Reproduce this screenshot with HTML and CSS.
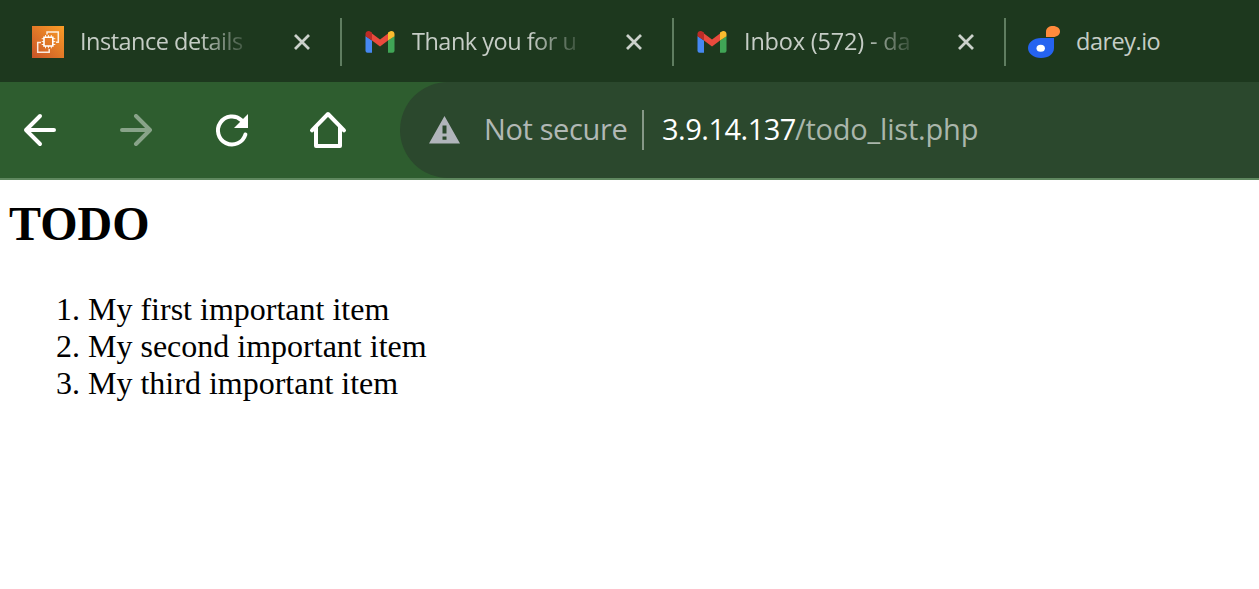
FILE: index.html
```html
<!DOCTYPE html>
<html lang="en">
<head>
<meta charset="utf-8">
<title>TODO</title>
<link rel="stylesheet" href="styles.css">
</head>
<body>
<svg class="defs" width="0" height="0" aria-hidden="true">
  <symbol id="gmail" viewBox="0 0 32 32">
    <path fill="#4688f1" d="M1.500 10l6.500 4.500V26.800H3.500a2 2 0 0 1-2-2z"/>
    <path fill="#40a556" d="M24 14.500l6.500-4.500v14.800a2 2 0 0 1-2 2H24z"/>
    <path fill="#e94a3d" d="M8 7.400l8 6 8-6v7.200l-8 6-8-6z"/>
    <path fill="#bd2c27" d="M1.500 8c0-2.900 3.300-3.800 5.500-2.100l1 .7v8l-6.500-4.400z"/>
    <path fill="#fbbc2f" d="M30.500 8c0-2.900-3.300-3.800-5.500-2.100l-1 .7v8l6.500-4.400z"/>
  </symbol>
  <symbol id="close" viewBox="0 0 16 16">
    <path d="M1 1l14 14M15 1L1 15" fill="none" stroke="#cbd1cb" stroke-width="2.800"/>
  </symbol>
</svg>
<header class="tabs">
  <div class="tab first">
    <svg class="favicon" viewBox="0 0 32 32">
      <defs><linearGradient id="aws" x1="0" y1="1" x2="1" y2="0"><stop offset="0" stop-color="#c85428"/><stop offset="1" stop-color="#fb9d27"/></linearGradient></defs>
      <path fill="url(#aws)" d="M0 0h32v32H0z"/>
      <path fill="none" stroke="#fff" stroke-width="1.500" stroke-opacity=".85" d="M15 8.500V6h11.300v10.300H24M9 16.500H5.700v9.800h11.500V23"/>
      <path fill="none" stroke="#fff" stroke-width="1.600" d="M12 11.200h8.800V20H12z"/>
      <path fill="none" stroke="#fff" stroke-width="1" stroke-opacity=".9" d="M13.500 9v2M16.400 9v2M19.300 9v2M13.500 20v2.300M16.400 20v2.300M19.300 20v2.300M9.700 12.700H12M9.700 15.600H12M9.700 18.500H12M21 12.700h2.300M21 15.600h2.300M21 18.500h2.300"/>
    </svg>
    <span class="title faded">Instance details</span>
    <svg class="close"><use href="#close"/></svg>
  </div>
  <div class="tab">
    <svg class="favicon"><use href="#gmail"/></svg>
    <span class="title faded">Thank you for u</span>
    <svg class="close"><use href="#close"/></svg>
  </div>
  <div class="tab">
    <svg class="favicon"><use href="#gmail"/></svg>
    <span class="title faded inbox">Inbox (572) - da</span>
    <svg class="close"><use href="#close"/></svg>
  </div>
  <div class="tab last">
    <svg class="favicon" viewBox="0 0 32 32">
      <path fill="#ff8a3c" d="M18 11V5.500C18 2 21 0 25 0s7 2.300 7 5.500S29 11 25 11z"/>
      <path fill="#2563f0" d="M26 12v10c0 6-5.500 10-13 10S0 27.500 0 22s5.500-10 13-10z"/>
      <ellipse cx="12.700" cy="22.200" rx="4.200" ry="3.500" fill="#fff"/>
    </svg>
    <span class="title">darey.io</span>
  </div>
</header>
<nav class="toolbar">
  <div class="buttons">
    <svg class="icon" viewBox="0 0 40 40"><path class="line" d="M34 20H6M20 6L6 20l14 14"/></svg>
    <svg class="icon disabled" viewBox="0 0 40 40"><path class="line" d="M6 20h28M20 6l14 14-14 14"/></svg>
    <svg class="icon" viewBox="0 0 40 40"><path class="line" d="M29.500 10.200A14 14 0 1 0 33.400 24.500"/><path fill="#fff" d="M36 4v14H22z"/></svg>
    <svg class="icon" viewBox="0 0 40 40"><path class="line" d="M4 20.300L20 4l16 16.300M8 17.500V36h24V17.500"/></svg>
  </div>
  <div class="address">
    <svg class="warning" viewBox="0 0 32 28"><path fill="#b1b5bb" fill-rule="evenodd" d="M16.500 0L32 27.500H1zM14.500 9.500v8h4v-8zM14.500 20.500v3.300h4v-3.300z"/></svg>
    <span class="security">Not secure</span>
    <span class="divider"></span>
    <span class="host">3.9.14.137</span><span class="path">/todo_list.php</span>
  </div>
</nav>
<main class="page">
  <h1 class="heading">TODO</h1>
  <ol class="list">
    <li>My first important item</li>
    <li>My second important item</li>
    <li>My third important item</li>
  </ol>
</main>
</body>
</html>
```
FILE: styles.css
```css
* { box-sizing: border-box; }
body { margin: 0; height: 589px; overflow: hidden; background: #fff; }
svg { display: block; flex: none; }
.defs { display: none; }
.tabs { display: flex; height: 82px; padding-top: 18px; background: #1d381e; font-family: "Open Sans", sans-serif; }
.tab { display: flex; align-items: center; width: 332px; height: 48px; padding-left: 22px; border-left: 2px solid #5f7d60; }
.tab.first { width: 340px; padding-left: 32px; border-left: 0; }
.tab.last { flex: 1; }
.favicon { width: 32px; height: 32px; }
.title { width: 168px; margin-left: 16px; padding-bottom: 2px; overflow: hidden; font-size: 23.500px; line-height: 46px; letter-spacing: -0.5px; white-space: nowrap; color: #c6cdc6; }
.faded { -webkit-mask-image: linear-gradient(90deg, #000 118px, transparent 176px); mask-image: linear-gradient(90deg, #000 118px, transparent 176px); }
.inbox { letter-spacing: -0.18px; }
.close { width: 16px; height: 16px; margin-left: 46px; }
.toolbar { display: flex; height: 98px; background: #2e5d2f; border-bottom: 2px solid #5f885f; }
.buttons { display: flex; align-items: center; gap: 56px; width: 400px; padding-left: 20px; }
.icon { width: 40px; height: 40px; }
.line { fill: none; stroke: #fff; stroke-width: 4; stroke-linecap: round; stroke-linejoin: round; }
.disabled { opacity: .43; }
.address { display: flex; flex: 1; align-items: center; height: 96px; padding-left: 28px; border-radius: 48px 0 0 48px; background: #2b482d; font: 29px/38px "Open Sans", sans-serif; white-space: nowrap; }
.warning { width: 32px; height: 28px; }
.security { width: 182px; padding: 0 0 2px 24px; letter-spacing: -0.37px; color: #b1b8b5; }
.divider { width: 2px; height: 40px; margin-right: 18px; background: #869887; }
.host { width: 133px; padding-bottom: 2px; letter-spacing: -0.5px; color: #fff; }
.path { padding-bottom: 2px; letter-spacing: -0.2px; color: #aab6ab; }
.page { padding: 16px 8px; font-family: "Liberation Serif", serif; color: #000; }
.heading { margin: 0; padding-left: 1px; font-size: 48px; line-height: 56px; }
.list { margin: 39px 0 0; padding-left: 80px; font-size: 32px; line-height: 37px; }
```
